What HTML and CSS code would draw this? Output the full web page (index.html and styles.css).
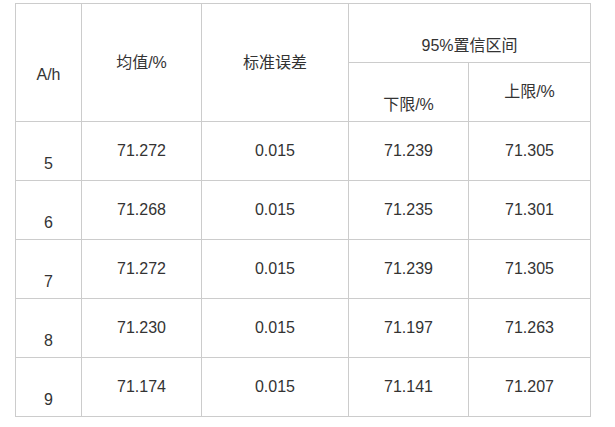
FILE: index.html
```html
<!DOCTYPE html>
<html lang="zh-CN">
<head>
<meta charset="utf-8">
<title>置信区间</title>
<link rel="stylesheet" href="styles.css">
</head>
<body>
<table class="data">
  <colgroup>
    <col class="c1"><col class="c2"><col class="c3"><col class="c4"><col class="c5">
  </colgroup>
  <tr>
    <td rowspan="2" class="low">A/h</td>
    <td rowspan="2">均值/%</td>
    <td rowspan="2">标准误差</td>
    <td colspan="2" class="low">95%置信区间</td>
  </tr>
  <tr>
    <td class="low">下限/%</td>
    <td>上限/%</td>
  </tr>
  <tr><td class="low">5</td><td>71.272</td><td>0.015</td><td>71.239</td><td>71.305</td></tr>
  <tr><td class="low">6</td><td>71.268</td><td>0.015</td><td>71.235</td><td>71.301</td></tr>
  <tr><td class="low">7</td><td>71.272</td><td>0.015</td><td>71.239</td><td>71.305</td></tr>
  <tr><td class="low">8</td><td>71.230</td><td>0.015</td><td>71.197</td><td>71.263</td></tr>
  <tr><td class="low">9</td><td>71.174</td><td>0.015</td><td>71.141</td><td>71.207</td></tr>
</table>
</body>
</html>
```
FILE: styles.css
```css
html, body {
  margin: 0;
  padding: 0;
  background: #fff;
}
body {
  padding: 3px 0 0 15px;
  font-family: "Liberation Sans", Arial, "Noto Sans CJK SC", sans-serif;
  font-size: 16px;
  color: #333;
}
.data {
  border-collapse: collapse;
  table-layout: fixed;
  width: 575px;
}
.c1 { width: 66px; }
.c2 { width: 120px; }
.c3 { width: 147px; }
.c4 { width: 120px; }
.c5 { width: 122px; }
.data tr {
  height: 59px;
}
.data td {
  border: 1px solid #ccc;
  padding: 0;
  text-align: center;
  vertical-align: middle;
  line-height: 20px;
}
.data td.low {
  padding-top: 25px;
}
```
